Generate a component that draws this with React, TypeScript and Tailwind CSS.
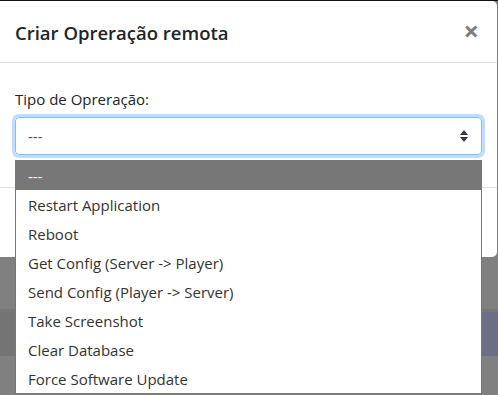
import React from "react";

const options = [
  "---",
  "Restart Application",
  "Reboot",
  "Get Config (Server -> Player)",
  "Send Config (Player -> Server)",
  "Take Screenshot",
  "Clear Database",
  "Force Software Update",
];

export default function App() {
  return (
    <div
      className="relative w-[498px] h-[395px] overflow-hidden bg-[#808080] text-[#212529]"
      style={{ fontFamily: '"Open Sans", "Noto Sans", sans-serif' }}
    >
      {/* backdrop top edge */}
      <div className="h-px bg-[#111]" />

      {/* modal */}
      <div className="flex">
        <div className="w-[497px] bg-white rounded-br-[5px] rounded-tr-[5px]">
          <div className="flex items-center justify-between pl-[15px] pr-[18px] h-[62px] border-b border-[#dee2e6]">
            <h5 className="text-[18.5px] font-semibold leading-[30px] pt-[2px]">Criar Opreração remota</h5>
            <button className="text-[27px] font-bold leading-none text-[#7d7d7d] pb-[2px]">×</button>
          </div>
          <div className="pl-[15px] pr-[15px] pt-[24px] pb-[16px]">
            <label className="block text-[15px] leading-[24px] mb-[6px]">Tipo de Opreração:</label>
            <div className="mb-[16px] w-[467px] h-[38px] rounded-[4px] border border-[#80bdff] shadow-[0_0_0_3px_rgba(0,123,255,0.25)] flex items-center justify-between pl-[12px] pr-[13px] text-[#495057] text-[15px]">
              <span>---</span>
              <svg width="8" height="12" viewBox="0 0 8 12">
                <path d="M4 0 L8 5 H0 Z M4 12 L0 7 H8 Z" fill="#343a40" />
              </svg>
            </div>
          </div>
          <div className="border-t border-[#dee2e6] h-[70px]" />
        </div>
      </div>

      {/* backdrop band */}
      <div className="mt-[52px] h-[47px] flex border-t-[3px] border-[#777]">
        <div className="w-[15px] bg-[#747474]" />
        <div className="flex-1 bg-[#747474]" />
        <div className="w-[17px] bg-[#6b6e85]" />
      </div>

      {/* native select dropdown */}
      <div className="absolute left-[15px] top-[160px] w-[467px] bg-white border border-[#767676] text-[15px]">
        {options.map((o, i) => (
          <div
            key={o}
            className={`h-[29px] leading-[28px] pt-[1px] pl-[12px] ${i === 0 ? "bg-[#777777] text-white" : "text-[#333]"}`}
          >
            {o}
          </div>
        ))}
      </div>
    </div>
  );
}
